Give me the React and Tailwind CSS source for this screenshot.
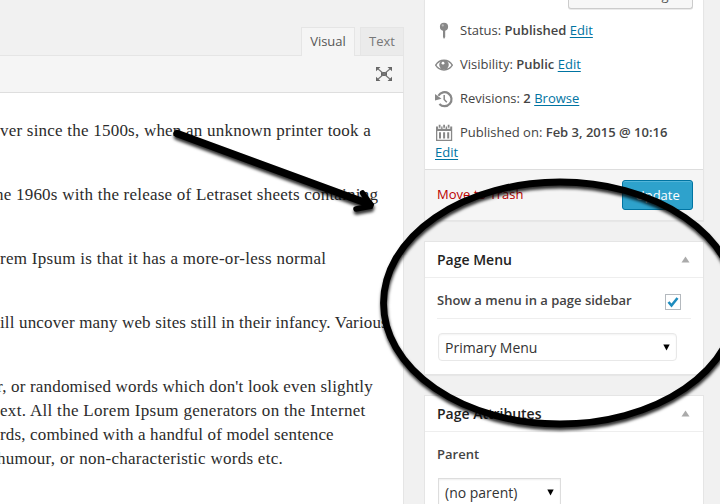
import React from "react";

const link = "text-[#0074a2] underline underline-offset-2";

function PinIcon() {
  return (
    <svg width="18" height="18" viewBox="0 0 18 18" fill="#888">
      <circle cx="9" cy="4.800" r="4.100" />
      <path d="M8 8h2.200v7L9 17l-1-2z" />
      <circle cx="7.800" cy="3.400" r="1.100" fill="#bbb" />
    </svg>
  );
}

function EyeIcon() {
  return (
    <svg width="18" height="18" viewBox="0 0 18 18" fill="none">
      <path d="M.7 9.200C4.500 2.600 13.500 2.600 17.300 9.200 13.500 15.500 4.500 15.500.7 9.200z" stroke="#888" strokeWidth="1.400" />
      <circle cx="9" cy="8.800" r="4.800" fill="#888" />
      <circle cx="8" cy="7.200" r="1.400" fill="#fff" />
    </svg>
  );
}

function HistoryIcon() {
  return (
    <svg width="18" height="18" viewBox="0 0 18 18" fill="none" stroke="#888">
      <path d="M3.400 5.800A7 7 0 1 1 4.400 14" strokeWidth="2.200" />
      <path d="M0 4v6.500l6.500-1.800z" fill="#888" stroke="none" />
      <path d="M9.200 5v4.500l2.600 2.700" strokeWidth="1.500" />
    </svg>
  );
}

function CalendarIcon() {
  return (
    <svg width="18" height="18" viewBox="0 0 18 18" fill="#888">
      <path fillRule="evenodd" d="M1 2.500h16.200V17H1zM2.300 7v8.700h13.600V7z" />
      <path d="M3 .800h3.200v4H3zM7.500.800h3.200v4H7.500zM12 .800h3.200v4H12z" fill="#fff" />
      <path d="M3.700.800h1.800v3H3.700zM8.200.800H10v3H8.200zM12.700.800h1.800v3h-1.800zM4 8.200h2v6.400H4zM8.100 8.200h2v6.400h-2zM12.200 8.200h2v6.400h-2z" />
    </svg>
  );
}

function FullscreenIcon() {
  return (
    <svg width="18" height="16" viewBox="0 0 18 16" fill="#666">
      <path d="M6 6h6v4H6z" />
      <path d="M1 1h4.500L1 5.300zM17 1h-4.500L17 5.300zM1 15h4.500L1 10.700zM17 15h-4.500l4.500-4.300z" />
      <path d="M2.500 2.500l13 11M15.500 2.500l-13 11" stroke="#777" strokeWidth="1.200" />
    </svg>
  );
}

function Row({ icon, children }) {
  return (
    <div className="flex h-[34px] items-center">
      <span className="w-[25px] shrink-0">{icon}</span>
      <span className="whitespace-nowrap">{children}</span>
    </div>
  );
}

function BoxHeader({ title }) {
  return (
    <div className="flex h-9 shrink-0 items-center justify-between border-b border-[#eee] pl-3 pr-[13px]">
      <h3 className="text-[14px] font-semibold text-[#222]">{title}</h3>
      <svg width="9" height="7" viewBox="0 0 9 7" fill="#aaa">
        <path d="M4.500.500L8.500 6.500h-8z" />
      </svg>
    </div>
  );
}

function Caret() {
  return (
    <svg width="7" height="7" viewBox="0 0 7 7" fill="#000">
      <path d="M.3.500h6.400L3.500 6.500z" />
    </svg>
  );
}

function Editor() {
  return (
    <div className="flex w-[404px] shrink-0 flex-col">
      <div className="h-[27px] shrink-0" />
      <div className="flex h-7 shrink-0 justify-end gap-[5px] text-[13px]">
        <div className="z-10 flex h-[29px] w-[54px] items-center justify-center border border-b-0 border-[#e5e5e5] bg-[#f5f5f5] text-[#555]">Visual</div>
        <div className="flex h-7 w-11 items-center justify-center border border-b-0 border-[#e5e5e5] bg-[#ebebeb] pt-px text-[#777]">Text</div>
      </div>
      <div className="flex h-[38px] shrink-0 items-center justify-end border border-l-0 border-[#e5e5e5] border-b-[#dedede] bg-[#f5f5f5] pr-[10px]">
        <FullscreenIcon />
      </div>
      <div className="flex grow flex-col gap-10 whitespace-nowrap border-r border-[#e5e5e5] bg-white pt-[26px] font-[Georgia,'Liberation_Serif',serif] text-[17px] leading-6 text-[#2b2b2b]">
        <p className="tracking-[0.22px]">ver since the 1500s, when an unknown printer took a</p>
        <p className="-ml-[5px] tracking-[0.22px]">he 1960s with the release of Letraset sheets containing</p>
        <p className="tracking-[0.285px]">rem Ipsum is that it has a more-or-less normal</p>
        <p className="tracking-[0.15px]">ill uncover many web sites still in their infancy. Various</p>
        <div>
          <p className="-ml-[3px] tracking-[0.18px]">r, or randomised words which don't look even slightly</p>
          <p className="tracking-[0.31px]">ext. All the Lorem Ipsum generators on the Internet</p>
          <p className="tracking-[0.155px]">rds, combined with a handful of model sentence</p>
          <p className="-ml-[3px] tracking-[0.275px]">humour, or non-characteristic words etc.</p>
        </div>
      </div>
    </div>
  );
}

function Sidebar() {
  return (
    <div className="flex w-[280px] shrink-0 flex-col gap-5 text-[13px] text-[#444]">
      <section className="flex h-[221px] shrink-0 flex-col border border-t-0 border-[#e5e5e5] bg-white shadow-[0_1px_1px_rgba(0,0,0,0.04)]">
        <div className="h-[169px] shrink-0 px-[10px]">
          <div className="flex h-[14px] justify-end">
            <div className="flex h-[9px] w-[125px] items-end justify-center rounded-b-[3px] border border-t-0 border-[#ccc] bg-[#f7f7f7] text-[#555] shadow-[0_1px_0_rgba(0,0,0,0.08)]">
              <span className="mb-[4px] leading-[18px]">Preview Changes</span>
            </div>
          </div>
          <Row icon={<PinIcon />}>Status: <b className="font-semibold">Published</b> <a className={link}>Edit</a></Row>
          <Row icon={<EyeIcon />}>Visibility: <b className="font-semibold">Public</b> <a className={link}>Edit</a></Row>
          <Row icon={<HistoryIcon />}>Revisions: <b className="font-semibold">2</b> <a className={link}>Browse</a></Row>
          <Row icon={<CalendarIcon />}>Published on: <b className="font-semibold">Feb 3, 2015 @ 10:16</b></Row>
          <a className={`block h-4 leading-[4px] ${link}`}>Edit</a>
        </div>
        <div className="flex grow items-center justify-between border-t border-[#ddd] bg-[#f5f5f5] pl-3 pr-[10px]">
          <a className="text-[#b00]">Move to Trash</a>
          <button className="h-[30px] w-[71px] rounded-[3px] border border-[#0074a2] bg-[#2ea2cc] pt-px text-white shadow-[inset_0_1px_0_rgba(120,200,230,0.5)]">Update</button>
        </div>
      </section>
      <section className="flex h-[134px] shrink-0 flex-col border border-[#e5e5e5] bg-white shadow-[0_1px_1px_rgba(0,0,0,0.04)]">
        <BoxHeader title="Page Menu" />
        <div className="px-3">
          <div className="flex h-[41px] items-center justify-between border-b border-[#eee] pr-[10px] pt-[3px]">
            <span className="pt-[3px] font-semibold">Show a menu in a page sidebar</span>
            <span className="mt-[5px] flex h-4 w-4 items-center justify-center border border-[#b4b9be] bg-white">
              <svg width="12" height="12" viewBox="0 0 12 12" fill="none" stroke="#1e8cbe" strokeWidth="2.600">
                <path d="M1.500 6l3 3.500L10.500 2" />
              </svg>
            </span>
          </div>
          <div className="ml-px mt-[14px] flex h-7 w-[239px] items-center justify-between rounded-[4px] border border-[#e8e8e8] pl-[6px] pr-[6px] text-[14px] text-[#333] shadow-[inset_0_1px_2px_rgba(0,0,0,0.05)]">
            Primary Menu <Caret />
          </div>
        </div>
      </section>
      <section className="flex h-[134px] shrink-0 flex-col border border-[#e5e5e5] bg-white">
        <BoxHeader title="Page Attributes" />
        <div className="px-3 pt-3">
          <div className="font-semibold leading-5">Parent</div>
          <div className="ml-px mt-[14px] flex h-7 w-[123px] items-center justify-between border border-[#ddd] pl-[6px] pr-[6px] pt-px text-[14px] text-[#333] shadow-[inset_0_1px_2px_rgba(0,0,0,0.07)]">
            (no parent) <Caret />
          </div>
        </div>
      </section>
    </div>
  );
}

export default function App() {
  return (
    <div className="relative flex h-[504px] w-[720px] gap-5 overflow-hidden bg-[#f1f1f1] font-['Open_Sans',sans-serif]">
      <Editor />
      <Sidebar />
      <svg className="pointer-events-none absolute inset-0 z-20" width="720" height="504" viewBox="0 0 720 504" fill="none">
        <defs>
          <filter id="shade" filterUnits="userSpaceOnUse" x="0" y="0" width="800" height="504">
            <feDropShadow dx="0.500" dy="3" stdDeviation="1.500" floodColor="#000" floodOpacity="0.8" />
          </filter>
        </defs>
        <g stroke="#000" filter="url(#shade)">
          <ellipse cx="560" cy="303" rx="176.500" ry="121" strokeWidth="6.800" />
          <path d="M177 133.500L369 204" strokeWidth="7.500" strokeLinecap="round" />
          <path d="M362.500 193L372 206L356 209" strokeWidth="5.500" strokeLinecap="round" strokeLinejoin="bevel" />
        </g>
      </svg>
    </div>
  );
}
